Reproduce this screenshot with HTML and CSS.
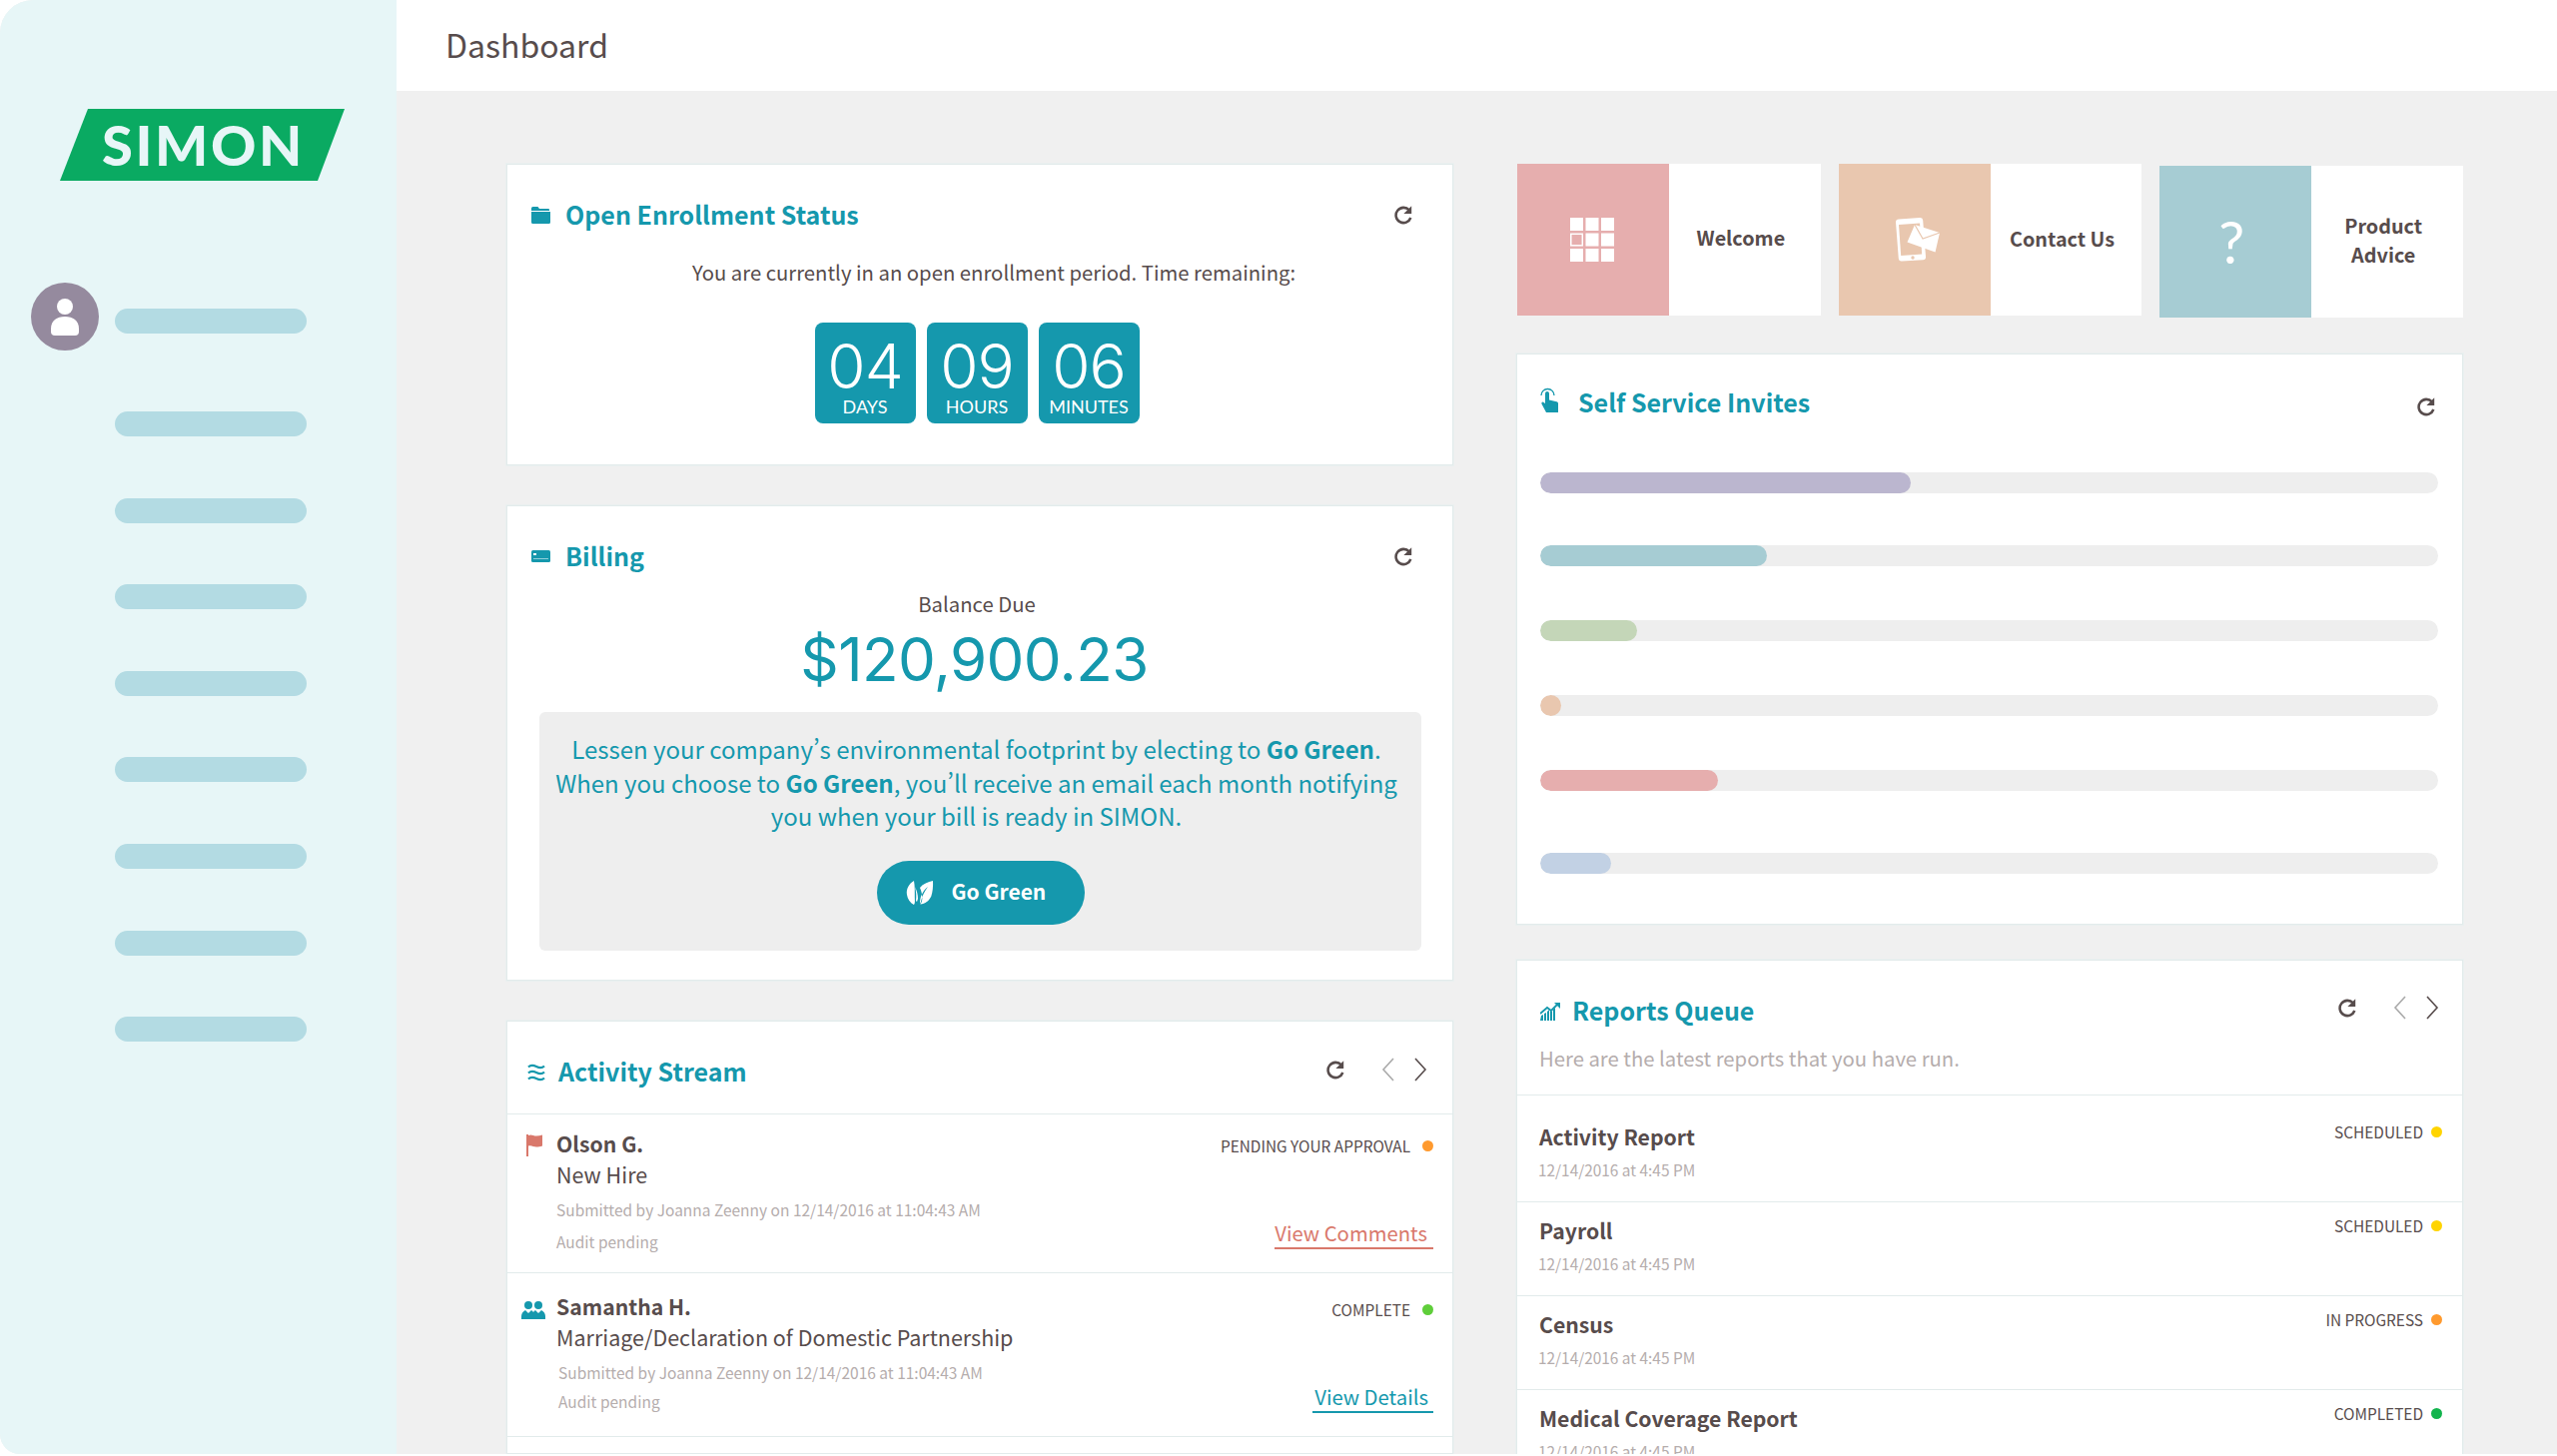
FILE: index.html
```html
<!DOCTYPE html>
<html lang="ja">
<head>
<meta charset="utf-8">
<title>Dashboard</title>
<link rel="stylesheet" href="styles.css">
</head>
<body>
<svg class="defs" width="0" height="0" aria-hidden="true">
  <symbol id="i-refresh" viewBox="2 1 17 18"><path d="M15.6 5.200A7.200 7.200 0 1 0 17 12.400" fill="none" stroke="currentColor" stroke-width="2.400"/><path d="M17.800 1.200v7.400h-7.400z" fill="currentColor"/></symbol>
  <symbol id="i-left" viewBox="0 0 14 24"><path d="M12 1 2 12l10 11" fill="none" stroke="currentColor" stroke-width="1.600"/></symbol>
  <symbol id="i-right" viewBox="0 0 14 24"><path d="m2 1 10 11L2 23" fill="none" stroke="currentColor" stroke-width="1.600"/></symbol>
</svg>
<div class="app">
  <aside class="sidebar">
    <div class="logo"><span>SIMON</span></div>
    <div class="user">
      <div class="avatar">
        <svg width="30" height="38" viewBox="0 0 30 38"><circle cx="15" cy="8" r="8" fill="#fff"/><path d="M1 30C1 22 7 18 15 18s14 4 14 12v3a4 4 0 0 1-4 4H5a4 4 0 0 1-4-4z" fill="#fff"/></svg>
      </div>
      <div class="pill pill-user"></div>
    </div>
    <nav class="nav">
      <div class="pill"></div><div class="pill"></div><div class="pill"></div><div class="pill"></div>
      <div class="pill"></div><div class="pill"></div><div class="pill"></div><div class="pill"></div>
    </nav>
  </aside>
  <main class="main">
    <header class="topbar"><h1>Dashboard</h1></header>
    <div class="content">
      <section class="col">
        <article class="card card-enroll">
          <div class="head">
            <svg class="icon" width="19" height="17" viewBox="0 0 19 17"><path d="M0 1.500A1.500 1.500 0 0 1 1.500 0h5L8 2h9a1 1 0 0 1 1 1v1H0zM0 5h19v10.500a1.500 1.500 0 0 1-1.500 1.500h-16A1.500 1.500 0 0 1 0 15.500z" fill="#1598ad"/></svg>
            <h2 class="title">Open Enrollment Status</h2>
            <svg class="refresh"><use href="#i-refresh"/></svg>
          </div>
          <p class="enroll-text">You are currently in an open enrollment period. Time remaining:</p>
          <div class="countdown">
            <div class="cd"><div class="cd-num">04</div><div class="cd-label">DAYS</div></div>
            <div class="cd"><div class="cd-num">09</div><div class="cd-label">HOURS</div></div>
            <div class="cd"><div class="cd-num">06</div><div class="cd-label">MINUTES</div></div>
          </div>
        </article>
        <article class="card card-billing">
          <div class="head">
            <svg class="icon" width="19" height="12" viewBox="0 0 19 12"><rect width="19" height="12" rx="1.500" fill="#1598ad"/><rect x="2" y="3" width="3" height="2" fill="#fff"/><rect x="2" y="8" width="15" height="1" fill="#8fd0da"/></svg>
            <h2 class="title">Billing</h2>
            <svg class="refresh"><use href="#i-refresh"/></svg>
          </div>
          <div class="balance-label">Balance Due</div>
          <div class="balance">$120,900.23</div>
          <div class="promo">
            <p>Lessen your company’s environmental footprint by electing to <b>Go Green</b>.<br>When you choose to <b>Go Green</b>, you’ll receive an email each month notifying<br>you when your bill is ready in SIMON.</p>
            <button class="btn" type="button">
              <svg width="28" height="26" viewBox="0 0 28 26"><path d="M8 1C3 4 0 9 1 15c.6 4 3 8 7 10 1.500-2 .8-4 .8-8C8.800 12 9 6 8 1zM10 21c.6-5 .3-9-1-14 2 4 3 8 3 12l-1 3z" fill="#fff"/><path d="M27 1c-5 1-10 3-13 7 1.500 3 2.400 7 2.300 11-.1 2-.6 4-2 5.500 5-.5 9-3.500 11-8 1.500-4.500 2-10 1.700-15.500zM22 7c-3 4-6 9-7 15l-1 2c-.2-7 3-13 8-17z" fill="#fff"/></svg>
              <span>Go Green</span>
            </button>
          </div>
        </article>
        <article class="card card-fill">
          <div class="head head-list">
            <svg class="icon" width="18" height="18" viewBox="0 0 18 18"><path d="M1 3.500C3 1.500 6 1.500 9 3s6 1.500 8-.5M1 9.500C3 7.500 6 7.500 9 9s6 1.500 8-.5M1 15.500c2-2 5-2 8-.5s6 1.500 8-.5" fill="none" stroke="#1598ad" stroke-width="2.200"/></svg>
            <h2 class="title">Activity Stream</h2>
            <div class="actions">
              <svg class="refresh"><use href="#i-refresh"/></svg>
              <svg class="chev chev-off"><use href="#i-left"/></svg>
              <svg class="chev"><use href="#i-right"/></svg>
            </div>
          </div>
          <div class="act act-a">
            <div class="act-icon">
              <svg width="18" height="22" viewBox="0 0 18 22"><path d="M1 0h2v22H1z" fill="#d9786b"/><path d="M3 1c3-1.500 5 .5 8 .5 2 0 4-.5 6-1v11c-2 .8-4 1-6 1-3 0-5-2-8-1z" fill="#d9786b"/></svg>
            </div>
            <div class="act-main">
              <div class="name">Olson G.</div>
              <div class="sub">New Hire</div>
              <div class="meta">Submitted by Joanna Zeenny on 12/14/2016 at 11:04:43 AM</div>
              <div class="meta meta-a">Audit pending</div>
            </div>
            <div class="act-side">
              <div class="status">PENDING YOUR APPROVAL<i class="dot dot-orange"></i></div>
              <a class="link link-red">View Comments</a>
            </div>
          </div>
          <div class="act act-b">
            <div class="act-icon">
              <svg width="24" height="18" viewBox="0 0 24 18"><circle cx="7" cy="4" r="4" fill="#1598ad"/><circle cx="17" cy="4" r="4" fill="#1598ad"/><path d="M0 18v-3c0-3 2-5 4-6l3 3 3-3c1 .6 1.500 1.200 2 2 .5-.8 1-1.400 2-2l3 3 3-3c2 1 4 3 4 6v3z" fill="#1598ad"/></svg>
            </div>
            <div class="act-main">
              <div class="name">Samantha H.</div>
              <div class="sub">Marriage/Declaration of Domestic Partnership</div>
              <div class="meta meta-shift">Submitted by Joanna Zeenny on 12/14/2016 at 11:04:43 AM</div>
              <div class="meta meta-b meta-shift">Audit pending</div>
            </div>
            <div class="act-side">
              <div class="status">COMPLETE<i class="dot dot-lime"></i></div>
              <a class="link link-teal">View Details</a>
            </div>
          </div>
        </article>
      </section>
      <section class="col">
        <div class="tiles">
          <a class="tile tile-welcome">
            <span class="tile-art art-pink">
              <svg width="44" height="44" viewBox="0 0 44 44"><g fill="#fff"><rect width="13" height="13"/><rect x="15.500" width="13" height="13"/><rect x="31" width="13" height="13"/><rect x=".8" y="16.300" width="11.500" height="11.500" fill="none" stroke="#fff" stroke-width="1.500"/><rect x="15.500" y="15.500" width="13" height="13"/><rect x="31" y="15.500" width="13" height="13"/><rect y="31" width="13" height="13"/><rect x="15.500" y="31" width="13" height="13"/><rect x="31" y="31" width="13" height="13"/></g></svg>
            </span>
            <span class="tile-label">Welcome</span>
          </a>
          <a class="tile tile-contact">
            <span class="tile-art art-peach">
              <svg width="45" height="44" viewBox="0 0 45 44"><path d="M3 1.500 24 0a3 3 0 0 1 3.200 2.800L30 39a3 3 0 0 1-2.800 3.200L6 43.500A3 3 0 0 1 2.800 41L0 4.500a3 3 0 0 1 3-3z" fill="#fff"/><path d="m3 7 21-1.500 2.200 31-21 1.500z" fill="#e9c7af"/><circle cx="17" cy="40" r="1.700" fill="#e9c7af"/><path d="m19 7 25 8-4.500 19.500-28-10z" fill="#fff"/><path d="m19 7 8 14 17-6" fill="none" stroke="#e9c7af" stroke-width="1.200"/></svg>
            </span>
            <span class="tile-label">Contact Us</span>
          </a>
          <a class="tile tile-product">
            <span class="tile-art art-blue"><span class="qmark">?</span></span>
            <span class="tile-label">Product<br>Advice</span>
          </a>
        </div>
        <article class="card card-invites">
          <div class="head head-invites">
            <svg class="icon" width="18" height="26" viewBox="0 0 18 26"><path d="M1 9a6.500 6.500 0 0 1 13 0" fill="none" stroke="#1598ad" stroke-width="1.300"/><path d="M5 7a2 2 0 0 1 4 0v6.500l7.500 1.700c1 .3 1.500 1 1.500 2V26H6L1.500 17.500c-.6-1.300 1-2.500 2-1.600L5 17z" fill="#1598ad"/></svg>
            <h2 class="title">Self Service Invites</h2>
            <svg class="refresh refresh-low"><use href="#i-refresh"/></svg>
          </div>
          <div class="bars">
            <div class="track"><div class="fill f-purple" style="width:371px"></div></div>
            <div class="track"><div class="fill f-teal" style="width:227px"></div></div>
            <div class="track"><div class="fill f-green" style="width:97px"></div></div>
            <div class="track"><div class="fill f-peach" style="width:21px"></div></div>
            <div class="track"><div class="fill f-pink" style="width:178px"></div></div>
            <div class="track"><div class="fill f-blue" style="width:71px"></div></div>
          </div>
        </article>
        <article class="card card-fill">
          <div class="head head-reports">
            <svg class="icon" width="20" height="18" viewBox="0 0 20 18"><path d="M0 18l1-5 2-1v6zM4 18v-7l2-1v8zM7 18V9l2-2v11zM10 18V8l2 1v9zM13 18V7l2-2v13z" fill="#1598ad"/><path d="M0 11 7 5l4 3 6-6" fill="none" stroke="#1598ad" stroke-width="1.800"/><path d="M14 0h6v6z" fill="#1598ad"/></svg>
            <h2 class="title">Reports Queue</h2>
            <div class="actions actions-reports">
              <svg class="refresh"><use href="#i-refresh"/></svg>
              <svg class="chev chev-off"><use href="#i-left"/></svg>
              <svg class="chev"><use href="#i-right"/></svg>
            </div>
          </div>
          <p class="reports-desc">Here are the latest reports that you have run.</p>
          <div class="rep rep-first">
            <div><div class="name">Activity Report</div><div class="rep-date">12/14/2016 at 4:45 PM</div></div>
            <div class="status status-rep">SCHEDULED<i class="dot dot-yellow"></i></div>
          </div>
          <div class="rep">
            <div><div class="name">Payroll</div><div class="rep-date">12/14/2016 at 4:45 PM</div></div>
            <div class="status status-rep">SCHEDULED<i class="dot dot-yellow"></i></div>
          </div>
          <div class="rep">
            <div><div class="name">Census</div><div class="rep-date">12/14/2016 at 4:45 PM</div></div>
            <div class="status status-rep">IN PROGRESS<i class="dot dot-orange"></i></div>
          </div>
          <div class="rep">
            <div><div class="name">Medical Coverage Report</div><div class="rep-date">12/14/2016 at 4:45 PM</div></div>
            <div class="status status-rep">COMPLETED<i class="dot dot-green"></i></div>
          </div>
        </article>
      </section>
    </div>
  </main>
</div>
</body>
</html>
```
FILE: styles.css
```css
* { box-sizing: border-box; }
html, body { margin: 0; padding: 0; background: #fff; }
body {
  font-family: "Noto Sans CJK JP", "Noto Sans", sans-serif;
  color: #574c4c;
  width: 2560px;
  height: 1458px;
  overflow: hidden;
}
h1, h2, p { margin: 0; font-weight: 400; }
.defs { position: absolute; }

.app {
  display: flex;
  height: 1456px;
  background: #f0f0f0;
  overflow: hidden;
  border-top-left-radius: 33px;
  border-bottom-left-radius: 20px;
}

.sidebar {
  width: 397px;
  flex: none;
  background: #e7f6f7;
  padding-top: 109px;
}
.logo {
  width: 285px;
  height: 72px;
  margin-left: 60px;
  background: #0aaa62;
  clip-path: polygon(28px 0, 285px 0, 258px 72px, 0 72px);
  display: flex;
  align-items: center;
  justify-content: center;
  color: #e7f6f7;
  font: 900 56px/72px "Lato", sans-serif;
  letter-spacing: 2.600px;
}
.logo span { margin-left: 2px; }
.user { display: flex; margin: 102px 0 0 31px; }
.avatar {
  width: 68px;
  height: 68px;
  border-radius: 50%;
  background: #958a9e;
  display: flex;
  align-items: center;
  justify-content: center;
  flex: none;
}
.avatar svg { margin-top: 2px; }
.pill { width: 192px; height: 25px; border-radius: 12.500px; background: #b3dbe3; }
.pill-user { margin: 26px 0 0 16px; }
.nav { display: flex; flex-direction: column; gap: 61.600px; margin: 61px 0 0 115px; }

.main { flex: 1; min-width: 0; }
.topbar {
  height: 91px;
  background: #fff;
  padding-left: 49px;
  display: flex;
  align-items: center;
}
.topbar h1 { font-size: 32px; line-height: 40px; margin-top: -3px; color: #574c4c; }

.content {
  display: grid;
  grid-template-columns: 948px 948px;
  column-gap: 63px;
  padding: 73px 0 0 110px;
}
.col { display: flex; flex-direction: column; height: 1292px; }

.card { background: #fff; border: 1px solid #e2ebeb; box-shadow: 0 0 0 1px #eaf0f0; flex: none; }
.card-enroll { height: 302px; margin-bottom: 40px; }
.card-billing { height: 476px; margin-bottom: 40px; }
.card-invites { height: 572px; margin-bottom: 35px; }
.card-fill { flex: 1; }

.head {
  display: flex;
  align-items: center;
  height: 36px;
  margin: 32px 39px 0 24px;
}
.icon { flex: none; margin-right: 15px; }
.title { font-size: 25px; line-height: 36px; font-weight: 700; color: #1598ad; margin-top: -3px; }
.refresh { width: 19px; height: 19px; color: #574c4c; margin-left: auto; flex: none; }

.enroll-text { margin-top: 23px; padding-left: 28px; text-align: center; font-size: 20.300px; line-height: 32px; }
.countdown { display: flex; justify-content: center; gap: 11px; margin: 35px 6px 0 0; }
.cd { width: 101px; height: 101px; border-radius: 8px; background: #1598ad; color: #fff; text-align: center; padding-top: 14px; }
.cd-num { font: 300 62px/60px "Inter", sans-serif; letter-spacing: -1px; }
.cd-label { font: 400 18px/20px "Lato", sans-serif; }

.balance-label { margin-top: 15px; text-align: center; padding-right: 6px; font-size: 20.300px; line-height: 28px; }
.balance { margin-top: 10px; text-align: center; padding-right: 11px; font: 400 60px/64px "Inter", sans-serif; letter-spacing: -.600px; color: #1598ad; }
.promo {
  width: 883px;
  height: 239px;
  margin: 21px 0 0 32px;
  padding-top: 20px;
  background: #eee;
  border-radius: 6px;
  color: #1598ad;
  text-align: center;
}
.promo p { font-size: 24px; line-height: 33.500px; padding-right: 8px; }
.promo b { font-weight: 700; }
.btn {
  display: inline-flex;
  align-items: center;
  width: 208px;
  height: 64px;
  margin-top: 28px;
  padding: 0 0 0 29px;
  border: 0;
  border-radius: 32px;
  background: #1598ad;
  color: #fff;
  font: 700 21px/32px "Noto Sans CJK JP", sans-serif;
}
.btn svg { margin-right: 18px; }
.btn span { margin-top: -3px; }

.head-list, .head-reports { margin: 33px 0 0; }
.head-list { height: 60px; padding: 0 25px 24px 20px; border-bottom: 1px solid #e2ebeb; }
.head-list .icon { margin-right: 13px; }
.actions { display: flex; align-items: center; margin-left: auto; padding-bottom: 5px; }
.actions .refresh { margin: 0 36px 0 0; }
.chev { width: 14px; height: 24px; color: #574c4c; }
.chev-off { color: #aaa; margin-right: 18px; }

.act { display: flex; padding-right: 19px; border-bottom: 1px solid #e2ebeb; }
.act-a { height: 159px; padding-top: 13px; }
.act-b { height: 164px; padding-top: 17px; }
.act-icon { width: 49px; flex: none; }
.act-a .act-icon { padding: 7px 0 0 18px; }
.act-b .act-icon { padding: 10px 0 0 14px; }
.act-main { flex: 1; }
.name { font-size: 21.200px; line-height: 32px; font-weight: 700; }
.sub { font-size: 21.500px; line-height: 30px; }
.meta { margin-top: 7px; font-size: 15.500px; line-height: 26px; color: #b5adad; }
.meta-a { margin-top: 6px; }
.meta-b { margin-top: 3px; }
.meta-shift { padding-left: 2px; }
.act-side { display: flex; flex-direction: column; align-items: flex-end; }
.status { display: flex; align-items: center; margin-top: 5px; font-size: 15.400px; line-height: 26px; }
.act-b .status { margin-top: 6px; }
.dot { width: 11px; height: 11px; border-radius: 50%; margin-left: 12px; margin-top: 1px; flex: none; }
.dot-orange { background: #ff9a2e; }
.dot-lime { background: #5fce3a; }
.dot-yellow { background: #ffd400; }
.dot-green { background: #12b44d; }
.link { margin-top: 61px; font-size: 20.300px; line-height: 26px; padding-bottom: 2px; border-bottom: 2px solid; }
.link-red { color: #d9786b; padding-right: 6px; }
.link-teal { color: #1598ad; padding-right: 5px; padding-left: 2px; }

.tiles { display: flex; gap: 18px; height: 154px; margin-bottom: 36px; padding-left: 1px; flex: none; }
.tile { display: flex; width: 304px; height: 152px; background: #fff; }
.tile-art { width: 152px; display: flex; align-items: center; justify-content: center; flex: none; }
.art-pink { background: #e6aeae; padding-right: 3px; }
.art-peach { background: #e9c7af; padding-left: 8px; }
.art-blue { background: #a6ccd3; }
.tile-label { flex: 1; display: flex; align-items: center; justify-content: center; text-align: center; padding: 0 8px 4px 0; font-size: 19.800px; line-height: 29px; font-weight: 700; }
.tile-contact .tile-label { padding-bottom: 3px; }
.tile-welcome .tile-label { padding-bottom: 5px; }
.tile-product { margin-top: 2px; }
.qmark { font: 400 58px/60px "Lato", sans-serif; color: #fff; margin-right: 8px; }

.head-invites { margin: 30px 26px 0 23px; }
.head-invites .icon { margin-right: 20px; margin-top: -6px; }
.refresh-low { margin-top: 8px; }
.bars { margin: 52px 0 0 23px; }
.track { width: 899px; height: 21px; border-radius: 10.500px; background: #eee; overflow: hidden; margin-bottom: 54px; }
.track:nth-child(1) { margin-bottom: 52px; }
.track:nth-child(5) { margin-bottom: 62px; }
.fill { height: 100%; border-radius: 10.500px; }
.f-purple { background: #bbb6cf; }
.f-teal { background: #a6ccd3; }
.f-green { background: #c4d6b8; }
.f-peach { background: #e9c7af; }
.f-pink { background: #e6aeae; }
.f-blue { background: #c2d1e4; }

.head-reports { height: 36px; padding: 0 23px 0 23px; }
.head-reports .icon { margin-right: 12px; }
.head-reports .title { margin-top: -4px; }
.actions-reports { padding-bottom: 8px; }
.reports-desc { margin: 13px 0 22px; padding-left: 22px; font-size: 20.300px; line-height: 30px; color: #b5adad; }
.rep {
  display: flex;
  justify-content: space-between;
  height: 94px;
  padding: 12px 20px 0 22px;
  border-top: 1px solid #e2ebeb;
}
.rep-first { height: 107px; padding-top: 25px; }
.rep-date { margin-top: 4px; margin-left: -1px; font-size: 15.400px; line-height: 26px; color: #b5adad; }
.status-rep { margin-top: -2px; height: 26px; }
.status-rep .dot { margin-left: 8px; }
```
